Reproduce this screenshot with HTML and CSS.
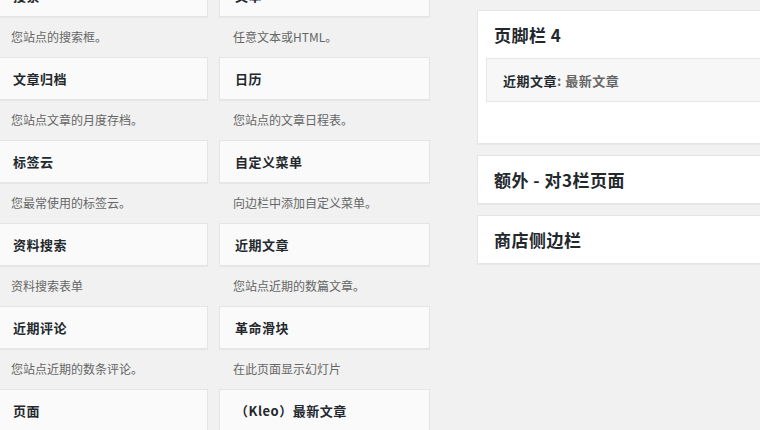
FILE: index.html
```html
<!DOCTYPE html>
<html lang="zh-CN">
<head>
    <meta charset="UTF-8">
    <meta name="viewport" content="width=device-width, initial-scale=1.0">
    <title>小工具</title>
    <link rel="stylesheet" href="styles.css">
</head>
<body>
    <div class="page">
        <div class="widget-list">
            <div class="widget">
                <div class="widget-top">搜索</div>
                <div class="widget-desc">您站点的搜索框。</div>
            </div>
            <div class="widget">
                <div class="widget-top">文本</div>
                <div class="widget-desc">任意文本或HTML。</div>
            </div>
            <div class="widget">
                <div class="widget-top">文章归档</div>
                <div class="widget-desc">您站点文章的月度存档。</div>
            </div>
            <div class="widget">
                <div class="widget-top">日历</div>
                <div class="widget-desc">您站点的文章日程表。</div>
            </div>
            <div class="widget">
                <div class="widget-top">标签云</div>
                <div class="widget-desc">您最常使用的标签云。</div>
            </div>
            <div class="widget">
                <div class="widget-top">自定义菜单</div>
                <div class="widget-desc">向边栏中添加自定义菜单。</div>
            </div>
            <div class="widget">
                <div class="widget-top">资料搜索</div>
                <div class="widget-desc">资料搜索表单</div>
            </div>
            <div class="widget">
                <div class="widget-top">近期文章</div>
                <div class="widget-desc">您站点近期的数篇文章。</div>
            </div>
            <div class="widget">
                <div class="widget-top">近期评论</div>
                <div class="widget-desc">您站点近期的数条评论。</div>
            </div>
            <div class="widget">
                <div class="widget-top">革命滑块</div>
                <div class="widget-desc">在此页面显示幻灯片</div>
            </div>
            <div class="widget">
                <div class="widget-top">页面</div>
                <div class="widget-desc">您站点的页面。</div>
            </div>
            <div class="widget">
                <div class="widget-top">（Kleo）最新文章</div>
                <div class="widget-desc">最新文章。</div>
            </div>
        </div>

        <div class="sidebars">
            <div class="sidebar open">
                <h2 class="sidebar-name">页脚栏 4</h2>
                <div class="sidebar-widget">近期文章<span class="in-title">: 最新文章</span></div>
            </div>
            <div class="sidebar">
                <h2 class="sidebar-name">额外 - 对3栏页面</h2>
            </div>
            <div class="sidebar">
                <h2 class="sidebar-name">商店侧边栏</h2>
            </div>
        </div>
    </div>
</body>
</html>
```

FILE: styles.css
```css
body {
    margin: 0;
    background: #f1f1f1;
    color: #23282d;
    font-family: "Noto Sans CJK SC", "Liberation Sans", sans-serif;
    overflow: hidden;
}

.page {
    display: flex;
    align-items: flex-start;
}

/* available widgets, two columns */
.widget-list {
    display: grid;
    grid-template-columns: 211px 211px;
    column-gap: 11px;
    margin: -26px 0 0 -3px;
    flex-shrink: 0;
}

.widget {
    height: 83px;
}

.widget-top {
    box-sizing: border-box;
    height: 43px;
    display: flex;
    align-items: center;
    padding: 0 15px;
    background: #fafafa;
    border: 1px solid #e5e5e5;
    box-shadow: 0 1px 1px rgba(0, 0, 0, 0.04);
    font-size: 13px;
    font-weight: 700;
    letter-spacing: 0.5px;
}

.widget-desc {
    height: 40px;
    line-height: 40px;
    padding-left: 14px;
    font-size: 12px;
    color: #666;
}

/* registered sidebars */
.sidebars {
    margin: 10px 0 0 47px;
    width: 320px;
    flex-shrink: 0;
}

.sidebar {
    background: #fff;
    border: 1px solid #e5e5e5;
    box-shadow: 0 1px 1px rgba(0, 0, 0, 0.04);
    margin-bottom: 11px;
}

.sidebar-name {
    margin: 0;
    height: 47px;
    line-height: 47px;
    padding-left: 16px;
    font-size: 17px;
    font-weight: 700;
    letter-spacing: 0.5px;
}

.sidebar.open {
    padding-bottom: 41px;
}

.sidebar-widget {
    box-sizing: border-box;
    height: 44px;
    display: flex;
    align-items: center;
    margin-left: 8px;
    padding-left: 16px;
    background: #f7f7f7;
    border: 1px solid #e5e5e5;
    border-right: none;
    font-size: 13px;
    font-weight: 700;
    letter-spacing: 0.5px;
}

.in-title {
    color: #666;
}
```
